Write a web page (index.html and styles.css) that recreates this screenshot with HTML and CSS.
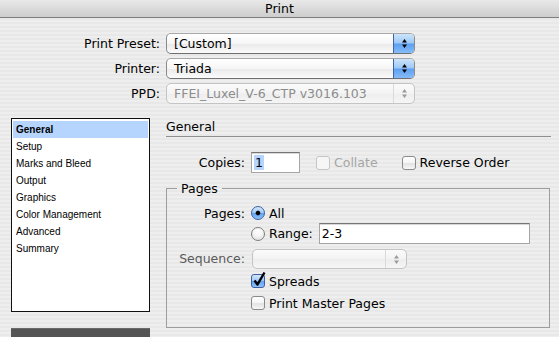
FILE: index.html
```html
<!DOCTYPE html>
<html lang="en">
<head>
    <meta charset="UTF-8">
    <meta name="viewport" content="width=device-width, initial-scale=1.0">
    <title>Print</title>
    <link rel="stylesheet" href="styles.css">
</head>
<body>
    <div class="titlebar">Print</div>

    <div class="presets">
        <label class="preset-label">Print Preset:</label>
        <div class="popup">
            <span class="popup-text">[Custom]</span>
            <span class="popup-arrows"><svg width="5" height="9" viewBox="0 0 5 9"><polygon points="0,3.5 2.5,0 5,3.5"/><polygon points="0,5.5 2.5,9 5,5.5"/></svg></span>
        </div>
        <label class="preset-label">Printer:</label>
        <div class="popup">
            <span class="popup-text">Triada</span>
            <span class="popup-arrows"><svg width="5" height="9" viewBox="0 0 5 9"><polygon points="0,3.5 2.5,0 5,3.5"/><polygon points="0,5.5 2.5,9 5,5.5"/></svg></span>
        </div>
        <label class="preset-label">PPD:</label>
        <div class="popup disabled">
            <span class="popup-text">FFEI_Luxel_V-6_CTP v3016.103</span>
            <span class="popup-arrows"><svg width="5" height="9" viewBox="0 0 5 9"><polygon points="0,3.5 2.5,0 5,3.5"/><polygon points="0,5.5 2.5,9 5,5.5"/></svg></span>
        </div>
    </div>

    <div class="main">
        <div class="sidebar">
            <div class="list">
                <div class="list-item selected">General</div>
                <div class="list-item">Setup</div>
                <div class="list-item">Marks and Bleed</div>
                <div class="list-item">Output</div>
                <div class="list-item">Graphics</div>
                <div class="list-item">Color Management</div>
                <div class="list-item">Advanced</div>
                <div class="list-item">Summary</div>
            </div>
            <div class="sidebar-bar"></div>
        </div>

        <div class="panel">
            <div class="panel-title">General</div>

            <div class="copies-row">
                <span class="row-label">Copies:</span>
                <span class="field copies-field"><span class="text-selected">1</span></span>
                <span class="option option-collate disabled">
                    <span class="checkbox"></span>Collate
                </span>
                <span class="option option-reverse">
                    <span class="checkbox"></span>Reverse Order
                </span>
            </div>

            <fieldset class="group">
                <legend>Pages</legend>
                <div class="group-rows">
                    <span class="row-label">Pages:</span>
                    <span class="option">
                        <span class="radio on"></span>All
                    </span>

                    <span class="row-label"></span>
                    <span class="option">
                        <span class="radio"></span>Range:
                        <span class="field range-field">2-3</span>
                    </span>

                    <span class="row-label disabled-label row-seq">Sequence:</span>
                    <div class="popup disabled seq-popup row-seq">
                        <span class="popup-text"></span>
                        <span class="popup-arrows"><svg width="5" height="9" viewBox="0 0 5 9"><polygon points="0,3.5 2.5,0 5,3.5"/><polygon points="0,5.5 2.5,9 5,5.5"/></svg></span>
                    </div>

                    <span class="row-label"></span>
                    <span class="option">
                        <span class="checkbox on">
                            <svg class="tick" width="14" height="16" viewBox="0 0 14 16"><path d="M2.5 9.5 L5.5 13.5 L12.5 1.5" fill="none" stroke="#000" stroke-width="2.4" stroke-linejoin="round"/></svg>
                        </span>Spreads
                    </span>

                    <span class="row-label"></span>
                    <span class="option">
                        <span class="checkbox"></span>Print Master Pages
                    </span>
                </div>
            </fieldset>
        </div>
    </div>
</body>
</html>
```

FILE: styles.css
```css
body {
    margin: 0;
    padding: 0;
    width: 559px;
    height: 337px;
    overflow: hidden;
    font-family: 'DejaVu Sans', 'Lucida Grande', sans-serif;
    font-size: 12.5px;
    color: #000;
    background: repeating-linear-gradient(to bottom, #eeeeee 0, #eeeeee 2px, #e8e8e8 2px, #e8e8e8 4px);
}

.titlebar {
    height: 17px;
    line-height: 17px;
    text-align: center;
    border-bottom: 1px solid #7f7f7f;
    background: linear-gradient(to bottom, #e9e9e9, #cdcdcd);
}

.presets {
    display: grid;
    grid-template-columns: 160px 249px;
    grid-auto-rows: 21px;
    column-gap: 6px;
    row-gap: 4px;
    padding-top: 15px;
    align-items: center;
}

.preset-label {
    text-align: right;
}

.popup {
    display: flex;
    height: 21px;
    box-sizing: border-box;
    border: 1px solid #8b8b8b;
    border-top-color: #a8a8a8;
    border-bottom-color: #6f6f6f;
    border-radius: 5px;
    background: linear-gradient(to bottom, #ffffff 0%, #f6f6f6 50%, #e9e9e9 51%, #fbfbfb 100%);
    overflow: hidden;
}

.popup-text {
    flex: 1;
    padding-left: 7px;
    line-height: 19px;
    white-space: nowrap;
    overflow: hidden;
}

.popup-arrows {
    width: 20px;
    display: flex;
    align-items: center;
    justify-content: center;
    border-left: 1px solid #3f62a8;
    background: linear-gradient(to bottom, #cde4fb 0%, #9dc8f6 48%, #5d9ff0 52%, #86bcf8 100%);
}

.popup-arrows svg {
    fill: #000;
}

.popup.disabled {
    border-color: #c4c4c4;
    background: linear-gradient(to bottom, #fbfbfb 0%, #f3f3f3 50%, #ededed 51%, #f6f6f6 100%);
}

.popup.disabled .popup-text {
    color: #8c8c8c;
}

.popup.disabled .popup-arrows {
    background: none;
    border-left-color: #dadada;
}

.popup.disabled .popup-arrows svg {
    fill: #9a9a9a;
}

.main {
    display: flex;
    margin-top: 14px;
    padding-left: 11px;
}

.sidebar {
    width: 139px;
    display: flex;
    flex-direction: column;
}

.list {
    height: 194px;
    box-sizing: border-box;
    border: 1px solid #111;
    background: #fff;
    padding: 2px 1px;
    font-family: 'Liberation Sans', Arial, sans-serif;
    font-size: 10px;
}

.list-item {
    height: 17px;
    line-height: 17px;
    padding-left: 3px;
}

.list-item.selected {
    background: #b5d5ff;
    font-weight: bold;
}

.sidebar-bar {
    margin-top: 16px;
    height: 12px;
    background: #555;
    border-top: 1px solid #6a6a6a;
}

.panel {
    margin-left: 16px;
    width: 385px;
}

.panel-title {
    height: 18px;
    line-height: 18px;
    border-bottom: 1px solid #8e8e8e;
}

.copies-row {
    display: flex;
    align-items: center;
    margin-top: 15px;
    height: 21px;
}

.row-label {
    width: 79px;
    text-align: right;
}

.field {
    height: 21px;
    box-sizing: border-box;
    border: 1px solid #a5a5a5;
    border-top-color: #767676;
    background: #fff;
    box-shadow: inset 0 1px 0 #d8d8d8;
    line-height: 19px;
    padding-left: 2px;
}

.copies-field {
    width: 49px;
    margin-left: 6px;
}

.text-selected {
    background: #b5d5ff;
    padding: 0 1px;
}

.option {
    display: flex;
    align-items: center;
}

.option-collate {
    margin-left: 16px;
}

.option-reverse {
    margin-left: 24px;
}

.option.disabled {
    color: #a6a6a6;
}

.checkbox {
    position: relative;
    width: 14px;
    height: 14px;
    box-sizing: border-box;
    margin-right: 4px;
    border: 1px solid #8a8a8a;
    border-radius: 3px;
    background: linear-gradient(to bottom, #ffffff 0%, #f4f4f4 50%, #e2e2e2 55%, #f8f8f8 100%);
}

.option.disabled .checkbox {
    border-color: #c6c6c6;
    background: #f6f6f6;
}

.checkbox.on {
    border-color: #3e5f9f;
    background: linear-gradient(to bottom, #d3e7fb 0%, #9fc8f6 48%, #5fa2f0 52%, #8fc3fa 100%);
}

.tick {
    position: absolute;
    left: 0;
    top: -4px;
}

.radio {
    width: 14px;
    height: 14px;
    box-sizing: border-box;
    margin-right: 4px;
    border: 1px solid #7e7e7e;
    border-radius: 50%;
    background: radial-gradient(circle at 50% 30%, #ffffff 0%, #f2f2f2 50%, #d6d6d6 100%);
}

.radio.on {
    border-color: #3e5f9f;
    background: radial-gradient(circle, #000 0, #000 1.8px, rgba(0, 0, 0, 0) 2.8px),
                linear-gradient(to bottom, #d3e7fb 0%, #9fc8f6 48%, #5fa2f0 52%, #8fc3fa 100%);
}

.group {
    margin: 8px 0 0 0;
    padding: 7px 0 14px 0;
    width: 384px;
    box-sizing: border-box;
    border: 1px solid #9d9d9d;
    min-width: 0;
}

.group legend {
    margin-left: 10px;
    padding: 0 4px;
    line-height: 15px;
}

.group-rows {
    display: grid;
    grid-template-columns: 78px auto;
    grid-template-rows: 20px 21px 25px 24px 20px;
    column-gap: 6px;
    align-items: center;
}

.group-rows .row-label {
    width: auto;
}

.row-seq {
    align-self: end;
    line-height: 20px;
}

.disabled-label {
    color: #5a5a5a;
}

.range-field {
    width: 211px;
    margin-left: 6px;
}

.seq-popup {
    width: 155px;
    height: 20px;
    margin-left: 1px;
}
```
